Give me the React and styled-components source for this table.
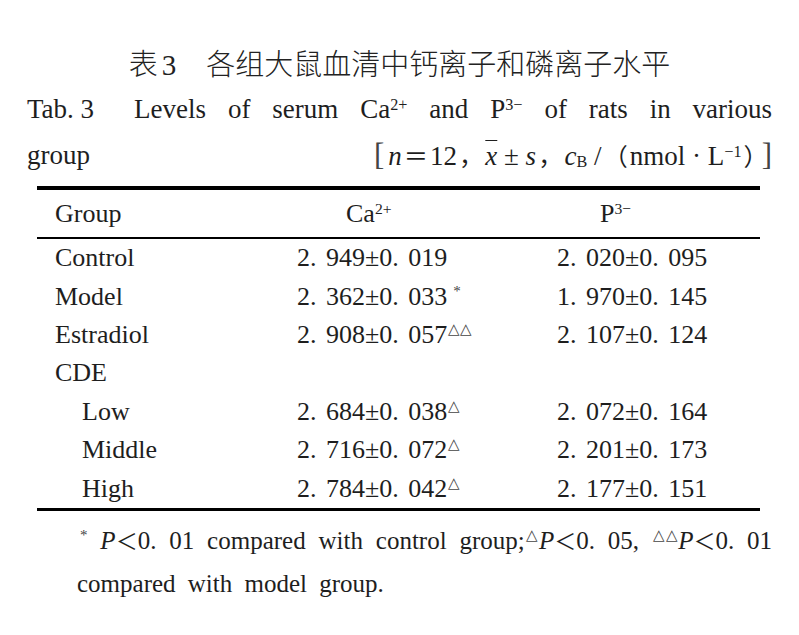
import React from 'react'
import styled, { createGlobalStyle } from 'styled-components'

const SERIF = '"Liberation Serif", "Times New Roman", Times, serif'
const CJK = '"Noto Sans CJK SC", "Noto Sans CJK JP", sans-serif'

const GlobalStyle = createGlobalStyle`
  body {
    margin: 0;
    background: #fff;
  }
  #root {
    width: 799px;
    height: 635px;
    overflow: hidden;
  }
`

const Page = styled.div`
  padding: 0 27px;
  font-family: ${SERIF};
  color: #1e1e1e;
`

const Title = styled.h1`
  margin: 46px 0 8px;
  height: 32px;
  line-height: 32px;
  font-size: 29px;
  font-weight: 300;
  text-align: center;
  font-family: ${CJK};
  color: #222;
`

const TitleNo = styled.span`
  font-family: ${SERIF};
  font-weight: normal;
  margin: 0 30px 0 4px;
`

const CaptionLine = styled.div`
  height: 46px;
  line-height: 46px;
  font-size: 27px;
  text-align: justify;
  text-align-last: justify;
`

const CaptionRow = styled(CaptionLine)`
  display: flex;
  justify-content: space-between;
`

const TabLabel = styled.span`
  display: inline-block;
  margin-right: 40px;
`

const Sup = styled.sup`
  font-size: 0.6em;
  line-height: 0;
  vertical-align: 0.5em;
`

const Sub = styled.sub`
  font-size: 0.6em;
  line-height: 0;
  vertical-align: -0.1em;
`

const Italic = styled.i`
  font-style: italic;
`

const Mean = styled.i`
  font-style: italic;
  text-decoration: overline;
  text-decoration-thickness: 1px;
`

const Wide = styled.span`
  font-family: ${CJK};
  font-size: 0.9em;
  margin: 0 2px;
`

const Bracket = styled.span`
  font-size: 31px;
  color: #444;
  margin: 0 ${(p) => (p.$close ? 0 : 4)}px 0 ${(p) => (p.$close ? 4 : 0)}px;
`

const Table = styled.table`
  width: 723px;
  margin: 8px 0 0 10px;
  border-collapse: collapse;
  border-top: 4px solid #000;
  border-bottom: 3px solid #000;
  font-family: ${SERIF};
  font-size: 26px;
  color: #1e1e1e;
  table-layout: fixed;
`

const HeadCell = styled.th`
  height: 47px;
  padding: 0 0 0 ${(p) => p.$pad}px;
  text-align: left;
  font-weight: normal;
  border-bottom: 2px solid #000;
  white-space: nowrap;
`

const GroupCell = styled.td`
  height: 38.4px;
  padding: 0 0 0 ${(p) => (p.$sub ? 45 : 18)}px;
  white-space: nowrap;
`

const ValueCell = styled.td`
  height: 38.4px;
  padding: 0;
  word-spacing: 3px;
  white-space: nowrap;
`

const Mark = styled.span`
  font-family: ${SERIF};
  font-size: 15px;
  vertical-align: 0.6em;
  line-height: 0;
  word-spacing: 0;
  color: #444;
  margin-left: ${(p) => (p.$gap ? 6 : 1)}px;
`

const Notes = styled.p`
  margin: 8px 0 0 50px;
  font-size: 25px;
  line-height: 43px;
  word-spacing: 6px;
  text-align: justify;
  text-indent: 2px;
`

const Lt = styled.span`
  font-family: ${CJK};
  font-size: 22px;
  line-height: 0;
`

const rows = [
  { group: 'Control', ca: '2. 949±0. 019', p: '2. 020±0. 095' },
  { group: 'Model', ca: '2. 362±0. 033', mark: '*', p: '1. 970±0. 145' },
  { group: 'Estradiol', ca: '2. 908±0. 057', mark: '△△', p: '2. 107±0. 124' },
  { group: 'CDE' },
  { group: 'Low', sub: true, ca: '2. 684±0. 038', mark: '△', p: '2. 072±0. 164' },
  { group: 'Middle', sub: true, ca: '2. 716±0. 072', mark: '△', p: '2. 201±0. 173' },
  { group: 'High', sub: true, ca: '2. 784±0. 042', mark: '△', p: '2. 177±0. 151' },
]

export default function App() {
  return (
    <>
      <GlobalStyle />
      <Page>
        <Title>
          表<TitleNo>3</TitleNo>各组大鼠血清中钙离子和磷离子水平
        </Title>
        <CaptionLine>
          <TabLabel>Tab. 3</TabLabel>Levels of serum Ca<Sup>2+</Sup> and P<Sup>3−</Sup> of rats in various
        </CaptionLine>
        <CaptionRow>
          <span>group</span>
          <span>
            <Bracket>[</Bracket>
            <Italic>n</Italic>
            <Wide>＝</Wide>12<Wide>，</Wide>
            <Mean>x</Mean> ± <Italic>s</Italic>
            <Wide>，</Wide>
            <Italic>c</Italic>
            <Sub>B</Sub> /<Wide>（</Wide>nmol · L<Sup>−1</Sup>
            <Wide>）</Wide>
            <Bracket $close>]</Bracket>
          </span>
        </CaptionRow>
        <Table>
          <colgroup>
            <col style={{ width: 260 }} />
            <col style={{ width: 260 }} />
            <col />
          </colgroup>
          <thead>
            <tr>
              <HeadCell $pad={18}>Group</HeadCell>
              <HeadCell $pad={49}>
                Ca<Sup>2+</Sup>
              </HeadCell>
              <HeadCell $pad={43}>
                P<Sup>3−</Sup>
              </HeadCell>
            </tr>
          </thead>
          <tbody>
            {rows.map((r) => (
              <tr key={r.group}>
                <GroupCell $sub={r.sub}>{r.group}</GroupCell>
                <ValueCell>
                  {r.ca}
                  {r.mark && <Mark $gap={r.mark === '*'}>{r.mark}</Mark>}
                </ValueCell>
                <ValueCell>{r.p}</ValueCell>
              </tr>
            ))}
          </tbody>
        </Table>
        <Notes>
          <Mark>*</Mark> <Italic>P</Italic>
          <Lt>＜</Lt>0. 01 compared with control group;<Mark>△</Mark>
          <Italic>P</Italic>
          <Lt>＜</Lt>0. 05, <Mark>△△</Mark>
          <Italic>P</Italic>
          <Lt>＜</Lt>0. 01 compared with model group.
        </Notes>
      </Page>
    </>
  )
}
